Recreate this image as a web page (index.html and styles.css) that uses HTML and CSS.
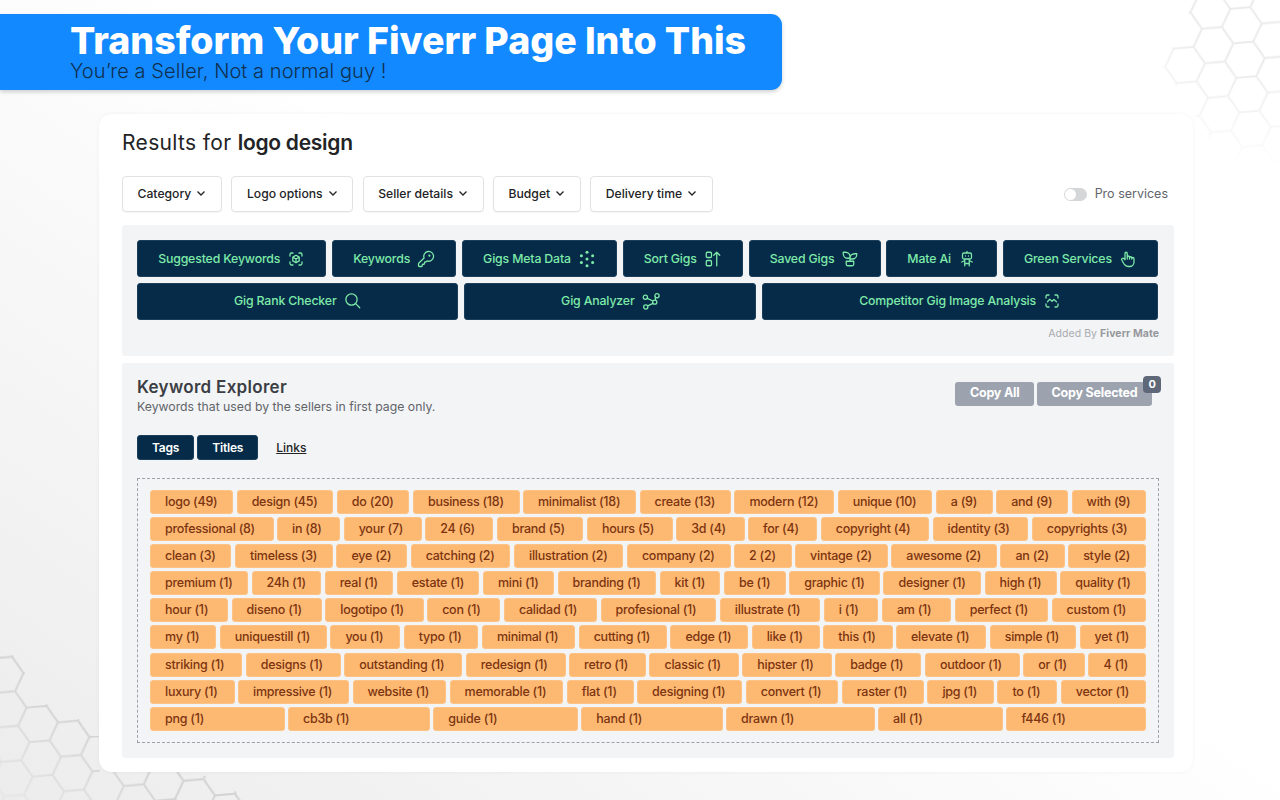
FILE: index.html
```html
<!DOCTYPE html>
<html lang="en">
<head>
<meta charset="utf-8">
<title>Fiverr Mate</title>
<link rel="stylesheet" href="styles.css">
</head>
<body>
<svg class="hexes" width="1280" height="800" viewBox="0 0 1280 800" aria-hidden="true">
  <defs>
    <pattern id="hexTop" width="60" height="34.64" patternUnits="userSpaceOnUse" patternTransform="translate(1163.6 49.5) rotate(-5)">
      <path d="M0 17.32L10 0H30L40 17.32L30 34.64H10L0 17.32M40 17.32H60" fill="none" stroke="#ebebeb" stroke-width="2"/>
    </pattern>
    <pattern id="hexBottom" width="60" height="34.64" patternUnits="userSpaceOnUse" patternTransform="translate(16.6 708.5) rotate(-5)">
      <path d="M0 17.32L10 0H30L40 17.32L30 34.64H10L0 17.32M40 17.32H60" fill="none" stroke="#d2d2d2" stroke-width="2"/>
    </pattern>
    <radialGradient id="fadeTop" gradientUnits="userSpaceOnUse" cx="1250" cy="10" r="160">
      <stop offset=".35" stop-color="#fff"/><stop offset="1" stop-color="#000"/>
    </radialGradient>
    <linearGradient id="fadeBottom" gradientUnits="userSpaceOnUse" x1="10" y1="800" x2="75" y2="715">
      <stop offset="0" stop-color="#333"/><stop offset="1" stop-color="#fff"/>
    </linearGradient>
    <mask id="maskTop"><polygon points="1163,67 1172,47 1192,45 1200,29 1188,13 1197,-6 1290,-6 1290,170 1230,170 1175,85" fill="url(#fadeTop)"/></mask>
    <mask id="maskBottom"><polygon points="-5,655 13,655 25,673 17,691 28,706 47,704 59,721 79,719 91,736 100,736 100,772 194,772 230,785 245,802 -5,802" fill="url(#fadeBottom)"/></mask>
  </defs>
  <rect width="1280" height="800" fill="url(#hexTop)" mask="url(#maskTop)"/>
  <rect width="1280" height="800" fill="url(#hexBottom)" mask="url(#maskBottom)"/>
</svg>

<header class="banner">
  <h1 class="banner-title">Transform Your Fiverr Page Into This</h1>
  <p class="banner-sub">You’re a Seller, Not a normal guy !</p>
</header>

<main class="card">
  <h2 class="results">Results for <strong>logo design</strong></h2>

  <div class="filters">
    <button class="filter">Category <svg class="chev" viewBox="0 0 10 10"><path d="M1.5 3.5L5 7l3.5-3.5"/></svg></button>
    <button class="filter">Logo options <svg class="chev" viewBox="0 0 10 10"><path d="M1.5 3.5L5 7l3.5-3.5"/></svg></button>
    <button class="filter">Seller details <svg class="chev" viewBox="0 0 10 10"><path d="M1.5 3.5L5 7l3.5-3.5"/></svg></button>
    <button class="filter">Budget <svg class="chev" viewBox="0 0 10 10"><path d="M1.5 3.5L5 7l3.5-3.5"/></svg></button>
    <button class="filter">Delivery time <svg class="chev" viewBox="0 0 10 10"><path d="M1.5 3.5L5 7l3.5-3.5"/></svg></button>
    <div class="pro"><span class="toggle"></span><span class="pro-label">Pro services</span></div>
  </div>

  <section class="panel tools">
    <div class="tool-row">
      <button class="tool">Suggested Keywords <svg class="ico" viewBox="0 0 24 24"><path d="M4 8V6a2 2 0 0 1 2-2h2M4 16v2a2 2 0 0 0 2 2h2M16 4h2a2 2 0 0 1 2 2v2M16 20h2a2 2 0 0 0 2-2v-2"/><path d="M12 7l4.3 2.5v5L12 17l-4.3-2.5v-5zM12 12l4.3-2.5M12 12v5M12 12L7.700 9.500"/></svg></button>
      <button class="tool">Keywords <svg class="ico" viewBox="0 0 24 24"><path d="M2.586 17.414A2 2 0 0 0 2 18.828V21a1 1 0 0 0 1 1h3a1 1 0 0 0 1-1v-1a1 1 0 0 1 1-1h1a1 1 0 0 0 1-1v-1a1 1 0 0 1 1-1h.172a2 2 0 0 0 1.414-.586l.814-.814a6.500 6.500 0 1 0-4-4z"/><circle cx="16.500" cy="7.500" r=".6"/></svg></button>
      <button class="tool">Gigs Meta Data <svg class="ico dots" viewBox="0 0 24 24"><circle cx="12" cy="3" r="2"/><circle cx="4.500" cy="7.500" r="2"/><circle cx="19.500" cy="7.500" r="2"/><circle cx="12" cy="12" r="2"/><circle cx="4.500" cy="16.500" r="2"/><circle cx="19.500" cy="16.500" r="2"/><circle cx="12" cy="21" r="2"/></svg></button>
      <button class="tool">Sort Gigs <svg class="ico" viewBox="0 0 24 24"><rect x="3" y="3" width="7" height="7" rx="1.500"/><rect x="3" y="14" width="7" height="7" rx="1.500"/><path d="M17 21V3M13 7l4-4 4 4"/></svg></button>
      <button class="tool">Saved Gigs <svg class="ico" viewBox="0 0 24 24"><path d="M7 15h10v4a2 2 0 0 1-2 2H9a2 2 0 0 1-2-2zM12 9a6 6 0 0 0-6-6H3v2a6 6 0 0 0 6 6h3M12 11a6 6 0 0 1 6-6h3v1a6 6 0 0 1-6 6h-3M12 15V9"/></svg></button>
      <button class="tool">Mate Ai <svg class="ico" viewBox="0 0 24 24"><path d="M6 6a2 2 0 0 1 2-2h8a2 2 0 0 1 2 2v4a2 2 0 0 1-2 2H8a2 2 0 0 1-2-2zM12 2v2M9 12v9M15 12v9M5 16l4-2M15 14l4 2M9 18h6M10 8v.01M14 8v.01"/></svg></button>
      <button class="tool">Green Services <svg class="ico" viewBox="0 0 24 24"><path d="M8 13V4.500a1.500 1.500 0 0 1 3 0V12M11 11.500v-2a1.500 1.500 0 1 1 3 0V12M14 10.500a1.500 1.500 0 0 1 3 0V12M17 11.500a1.500 1.500 0 0 1 3 0V16a6 6 0 0 1-6 6h-2 .208a6 6 0 0 1-5.012-2.700L7 19c-.312-.479-1.407-2.388-3.286-5.728a1.500 1.500 0 0 1 .536-2.022 1.867 1.867 0 0 1 2.280.28L8 13"/></svg></button>
    </div>
    <div class="tool-row tool-row-wide">
      <button class="tool">Gig Rank Checker <svg class="ico" viewBox="0 0 24 24"><circle cx="10" cy="10" r="7.500"/><path d="M21 21l-5.500-5.500"/></svg></button>
      <button class="tool">Gig Analyzer <svg class="ico" viewBox="0 0 24 24"><circle cx="4.500" cy="7" r="2.800"/><circle cx="20" cy="5" r="2.800"/><circle cx="5" cy="20" r="2.800"/><circle cx="17" cy="13.500" r="2.800"/><path d="M7 8.500l7.500 3.500M14.800 15.200L7.500 18.500M17.700 6.500L18 10.800"/></svg></button>
      <button class="tool">Competitor Gig Image Analysis <svg class="ico" viewBox="0 0 24 24"><path d="M4 8V6a2 2 0 0 1 2-2h2M4 16v2a2 2 0 0 0 2 2h2M16 4h2a2 2 0 0 1 2 2v2M16 20h2a2 2 0 0 0 2-2v-2"/><path d="M6 13l3-3.500 3 3 2.500-2.500 3.500 3"/></svg></button>
    </div>
    <p class="added">Added By <strong>Fiverr Mate</strong></p>
  </section>

  <section class="panel explorer">
    <div class="explorer-head">
      <div>
        <h3 class="explorer-title">Keyword Explorer</h3>
        <p class="explorer-sub">Keywords that used by the sellers in first page only.</p>
      </div>
      <div class="copy-group">
        <button class="copy">Copy All</button>
        <button class="copy copy-selected">Copy Selected<span class="badge">0</span></button>
      </div>
    </div>
    <div class="tabs">
      <button class="tab">Tags</button>
      <button class="tab">Titles</button>
      <a class="tab-link" href="#">Links</a>
    </div>
    <div class="tag-box">
      <div class="tag-row"><span class="tag">logo (49)</span><span class="tag">design (45)</span><span class="tag">do (20)</span><span class="tag">business (18)</span><span class="tag">minimalist (18)</span><span class="tag">create (13)</span><span class="tag">modern (12)</span><span class="tag">unique (10)</span><span class="tag">a (9)</span><span class="tag">and (9)</span><span class="tag">with (9)</span></div>
      <div class="tag-row"><span class="tag">professional (8)</span><span class="tag">in (8)</span><span class="tag">your (7)</span><span class="tag">24 (6)</span><span class="tag">brand (5)</span><span class="tag">hours (5)</span><span class="tag">3d (4)</span><span class="tag">for (4)</span><span class="tag">copyright (4)</span><span class="tag">identity (3)</span><span class="tag">copyrights (3)</span></div>
      <div class="tag-row"><span class="tag">clean (3)</span><span class="tag">timeless (3)</span><span class="tag">eye (2)</span><span class="tag">catching (2)</span><span class="tag">illustration (2)</span><span class="tag">company (2)</span><span class="tag">2 (2)</span><span class="tag">vintage (2)</span><span class="tag">awesome (2)</span><span class="tag">an (2)</span><span class="tag">style (2)</span></div>
      <div class="tag-row"><span class="tag">premium (1)</span><span class="tag">24h (1)</span><span class="tag">real (1)</span><span class="tag">estate (1)</span><span class="tag">mini (1)</span><span class="tag">branding (1)</span><span class="tag">kit (1)</span><span class="tag">be (1)</span><span class="tag">graphic (1)</span><span class="tag">designer (1)</span><span class="tag">high (1)</span><span class="tag">quality (1)</span></div>
      <div class="tag-row"><span class="tag">hour (1)</span><span class="tag">diseno (1)</span><span class="tag">logotipo (1)</span><span class="tag">con (1)</span><span class="tag">calidad (1)</span><span class="tag">profesional (1)</span><span class="tag">illustrate (1)</span><span class="tag">i (1)</span><span class="tag">am (1)</span><span class="tag">perfect (1)</span><span class="tag">custom (1)</span></div>
      <div class="tag-row"><span class="tag">my (1)</span><span class="tag">uniquestill (1)</span><span class="tag">you (1)</span><span class="tag">typo (1)</span><span class="tag">minimal (1)</span><span class="tag">cutting (1)</span><span class="tag">edge (1)</span><span class="tag">like (1)</span><span class="tag">this (1)</span><span class="tag">elevate (1)</span><span class="tag">simple (1)</span><span class="tag">yet (1)</span></div>
      <div class="tag-row"><span class="tag">striking (1)</span><span class="tag">designs (1)</span><span class="tag">outstanding (1)</span><span class="tag">redesign (1)</span><span class="tag">retro (1)</span><span class="tag">classic (1)</span><span class="tag">hipster (1)</span><span class="tag">badge (1)</span><span class="tag">outdoor (1)</span><span class="tag">or (1)</span><span class="tag">4 (1)</span></div>
      <div class="tag-row"><span class="tag">luxury (1)</span><span class="tag">impressive (1)</span><span class="tag">website (1)</span><span class="tag">memorable (1)</span><span class="tag">flat (1)</span><span class="tag">designing (1)</span><span class="tag">convert (1)</span><span class="tag">raster (1)</span><span class="tag">jpg (1)</span><span class="tag">to (1)</span><span class="tag">vector (1)</span></div>
      <div class="tag-row"><span class="tag">png (1)</span><span class="tag">cb3b (1)</span><span class="tag">guide (1)</span><span class="tag">hand (1)</span><span class="tag">drawn (1)</span><span class="tag">all (1)</span><span class="tag">f446 (1)</span></div>
    </div>
  </section>
</main>
</body>
</html>
```

FILE: styles.css
```css
* { box-sizing: border-box; }

html, body { margin: 0; padding: 0; }

body {
  position: relative;
  width: 1280px;
  height: 800px;
  overflow: hidden;
  padding-top: 14px;
  font-family: "Inter", "Liberation Sans", sans-serif;
  color: #222325;
  background: linear-gradient(215deg, #ffffff 0%, #ffffff 45%, #ececec 100%);
}

button { font-family: inherit; cursor: pointer; }

.hexes { position: absolute; left: 0; top: 0; }

.banner {
  position: relative;
  width: 782px;
  height: 76px;
  padding: 9px 0 0 70px;
  background: #1289ff;
  border-radius: 0 11px 11px 0;
  box-shadow: 0 2px 4px rgba(0, 0, 0, .18);
}

.banner-title {
  margin: 0;
  height: 36px;
  font-size: 37.500px;
  line-height: 36px;
  font-weight: 800;
  color: #fff;
  white-space: nowrap;
}

.banner-sub {
  margin: 1px 0 0;
  font-size: 20px;
  line-height: 22px;
  font-weight: 300;
  letter-spacing: .06px;
  color: #10304f;
  white-space: nowrap;
}

.card {
  position: relative;
  width: 1094px;
  height: 658px;
  margin: 24px 0 0 99px;
  padding: 15px 19px 14px 23px;
  background: #fff;
  border-radius: 13px;
  box-shadow: 0 0 4px rgba(0, 0, 0, .05);
}

.results {
  margin: 0;
  font-size: 21px;
  line-height: 28px;
  font-weight: 400;
  letter-spacing: .35px;
  color: #222325;
}

.results strong { font-weight: 600; letter-spacing: -.28px; }

.filters {
  display: flex;
  align-items: center;
  gap: 9.500px;
  height: 36px;
  margin-top: 19px;
  padding-right: 6px;
}

.filter {
  display: flex;
  align-items: center;
  gap: 5px;
  height: 36px;
  padding: 0 14.500px 2px;
  background: #fff;
  border: 1px solid #e1e2e4;
  border-radius: 4px;
  font-size: 12.200px;
  font-weight: 500;
  color: #222325;
  box-shadow: 0 1px 1px rgba(0, 0, 0, .04);
}

.chev { width: 10px; height: 10px; fill: none; stroke: #222325; stroke-width: 1.300; }

.pro {
  display: flex;
  align-items: center;
  gap: 8px;
  margin-left: auto;
  font-size: 12.500px;
  color: #62646a;
}

.pro-label { padding-bottom: 2px; }

.toggle {
  position: relative;
  width: 23px;
  height: 13px;
  border-radius: 7px;
  background: #d5d6d8;
}

.toggle::before {
  content: "";
  position: absolute;
  left: 1px;
  top: 1px;
  width: 11px;
  height: 11px;
  border-radius: 50%;
  background: #fff;
}

.panel {
  background: #f3f4f6;
  border-radius: 3px;
}

.tools {
  height: 131px;
  margin-top: 13px;
  padding: 15px 16px 0 15px;
}

.tool-row {
  display: flex;
  gap: 5.700px;
  margin-bottom: 6px;
}

.tool {
  flex: 1 1 auto;
  display: flex;
  align-items: center;
  justify-content: center;
  gap: 7px;
  height: 37px;
  padding: 0 10px;
  background: #052b48;
  border: 1px solid #1b3f5a;
  border-radius: 3px;
  font-size: 12.300px;
  font-weight: 500;
  letter-spacing: -.15px;
  color: #7eeaa9;
  white-space: nowrap;
}

.tool-row-wide .tool { padding-bottom: 2px; }

.ico {
  flex: none;
  width: 18px;
  height: 18px;
  fill: none;
  stroke: #7eeaa9;
  stroke-width: 1.700;
  stroke-linecap: round;
  stroke-linejoin: round;
}

.dots { fill: #7eeaa9; stroke: none; }

.added {
  margin: 7px -1px 0 0;
  font-size: 10.500px;
  line-height: 14px;
  letter-spacing: .05px;
  text-align: right;
  color: #a9abaf;
}

.added strong { color: #96989c; font-weight: 700; }

.explorer {
  height: 395px;
  margin-top: 7px;
  padding: 13px 15px 0;
}

.explorer-head {
  display: flex;
  justify-content: space-between;
  align-items: flex-start;
  height: 59px;
}

.explorer-title {
  margin: 0;
  font-size: 17px;
  line-height: 22px;
  font-weight: 600;
  letter-spacing: .3px;
  color: #3b3e44;
}

.explorer-sub {
  margin: 1px 0 0;
  font-size: 12.250px;
  line-height: 16px;
  color: #62646a;
}

.copy-group {
  display: flex;
  gap: 3px;
  margin: 6px 7px 0 0;
}

.copy {
  position: relative;
  height: 24px;
  padding: 0 14.500px 3px;
  background: #9ca3af;
  border: 0;
  border-radius: 3px;
  font-size: 12.500px;
  font-weight: 700;
  letter-spacing: -.2px;
  color: #fff;
}

.badge {
  position: absolute;
  right: -9px;
  top: -6px;
  width: 18px;
  height: 17px;
  border-radius: 4px;
  background: #5f6878;
  font-size: 11px;
  line-height: 17px;
  text-align: center;
  color: #fff;
}

.tabs {
  display: flex;
  align-items: center;
  gap: 3px;
  height: 25px;
}

.tab {
  height: 25px;
  padding: 0 14px;
  background: #052b48;
  border: 1px solid #1b3f5a;
  border-radius: 3px;
  font-size: 12px;
  font-weight: 600;
  letter-spacing: -.2px;
  color: #fff;
}

.tab-link {
  margin-left: 15px;
  font-size: 12px;
  font-weight: 500;
  color: #222325;
}

.tag-box {
  display: flex;
  flex-direction: column;
  gap: 3.100px;
  margin-top: 18px;
  height: 265px;
  padding: 11px 12px;
  border: 1px dashed #9ea1a7;
}

.tag-row { display: flex; gap: 3.500px; }

.tag {
  flex: 1 1 auto;
  height: 24px;
  padding: 0 14px;
  background: #fdb972;
  border: 1px solid #fdc286;
  border-radius: 3px;
  font-size: 12.500px;
  line-height: 22px;
  font-weight: 500;
  letter-spacing: -.25px;
  color: #7c3410;
  white-space: nowrap;
}
```
